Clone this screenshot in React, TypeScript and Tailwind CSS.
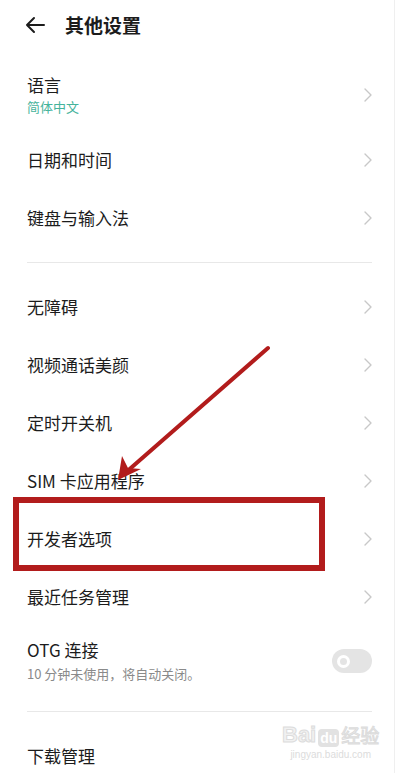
import React from "react";

const font = { fontFamily: '"Noto Sans CJK SC", "Noto Sans", sans-serif' };

function Chevron() {
  return (
    <svg width="10" height="16" viewBox="0 0 10 16" className="shrink-0">
      <path d="M2 2 L8 8 L2 14" fill="none" stroke="#c8c8c8" strokeWidth="1.4" strokeLinecap="round" strokeLinejoin="round" />
    </svg>
  );
}

function Row({ title, sub, noArrow }: { title: string; sub?: string; noArrow?: boolean }) {
  return (
    <div className={`flex items-center justify-between pl-[27px] pr-[21px] ${sub ? "h-[72px]" : "h-[58px]"}`}>
      <div className="flex flex-col">
        <span className="text-[17px] leading-[22px] text-[#1c1c1c]">{title}</span>
        {sub && <span className="text-[13px] leading-[20px] mt-[1px] text-[#45b39b]">{sub}</span>}
      </div>
      {!noArrow && <Chevron />}
    </div>
  );
}

function Divider() {
  return (
    <div className="h-[31px] flex items-center pl-[27px] pr-[22px]">
      <div className="h-px w-full bg-[#e8e8e8]" />
    </div>
  );
}

export default function App() {
  return (
    <div className="relative w-[400px] h-[773px] overflow-hidden bg-white" style={font}>
      <div className="w-[395px] h-full border-r border-[#efefef]">
        {/* Header */}
        <div className="h-[59px] flex items-start pt-[13px] pl-[24px]">
          <svg width="22" height="22" viewBox="0 0 22 22" className="mt-[1px]">
            <path d="M20 11 H3 M10 4 L3 11 L10 18" fill="none" stroke="#1c1c1c" strokeWidth="2" strokeLinecap="round" strokeLinejoin="round" />
          </svg>
          <span className="ml-[19px] text-[19px] leading-[24px] font-bold text-[#1c1c1c]">其他设置</span>
        </div>

        <Row title="语言" sub="简体中文" />
        <Row title="日期和时间" />
        <Row title="键盘与输入法" />
        <Divider />
        <Row title="无障碍" />
        <Row title="视频通话美颜" />
        <Row title="定时开关机" />
        <Row title="SIM 卡应用程序" />
        <Row title="开发者选项" />
        <Row title="最近任务管理" />

        {/* OTG */}
        <div className="h-[70px] flex items-center justify-between pl-[27px] pr-[22px]">
          <div className="flex flex-col">
            <span className="text-[17px] leading-[22px] text-[#1c1c1c]">OTG 连接</span>
            <span className="text-[13px] leading-[18px] mt-[4px] text-[#8a8a8a]">10 分钟未使用，将自动关闭。</span>
          </div>
          <div className="w-[40px] h-[24px] rounded-full bg-[#e4e4e4] flex items-center pl-[5px]">
            <div className="w-[13px] h-[13px] rounded-full border-[3px] border-white" />
          </div>
        </div>
        <Divider />
        <Row title="下载管理" noArrow />
      </div>

      {/* Watermark */}
      <div className="absolute left-[282px] top-[723px] flex flex-col items-center pointer-events-none">
        <div className="flex items-end">
          <span className="text-[22px] leading-[24px] font-bold text-[#f1f1f1]" style={{ fontFamily: '"Liberation Sans", sans-serif', WebkitTextStroke: "1px #dcdcdc" }}>Bai</span>
          <span className="text-[14px] leading-[18px] mx-[2px] px-[2px] rounded bg-[#e2e2e2] text-white font-bold" style={{ fontFamily: '"Liberation Sans", sans-serif' }}>du</span>
          <span className="text-[19px] leading-[24px] text-[#f1f1f1]" style={{ WebkitTextStroke: "1px #dcdcdc" }}>经验</span>
        </div>
        <span className="text-[10px] leading-[12px] text-[#dcdcdc] mt-[2px]" style={{ fontFamily: '"Liberation Sans", sans-serif' }}>jingyan.baidu.com</span>
      </div>

      {/* Annotation: red box */}
      <div className="absolute left-[13px] top-[497px] w-[312px] h-[74px] border-[6px] border-[#b21c1c] pointer-events-none" />

      {/* Annotation: arrow */}
      <svg className="absolute left-0 top-0 pointer-events-none" width="400" height="773" viewBox="0 0 400 773">
        <line x1="268" y1="348" x2="124" y2="474" stroke="#b21c1c" strokeWidth="4" strokeLinecap="round" />
        <path d="M118 480 L122 456 L128 468 L141 469 Z" fill="#b21c1c" />
      </svg>
    </div>
  );
}
